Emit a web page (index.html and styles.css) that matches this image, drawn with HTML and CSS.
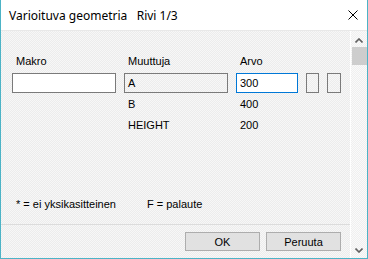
FILE: index.html
```html
<!DOCTYPE html>
<html lang="fi">
<head>
    <meta charset="UTF-8">
    <title>Varioituva geometria</title>
    <link rel="stylesheet" href="styles.css">
</head>
<body>
    <div class="window">
        <div class="titlebar">
            <span class="title">Varioituva geometria&nbsp;&nbsp;&nbsp;Rivi 1/3</span>
            <svg class="close" width="10" height="10" viewBox="0 0 10 10">
                <path d="M0.5 0.5 L9.5 9.5 M9.5 0.5 L0.5 9.5" stroke="#000" stroke-width="1" fill="none"/>
            </svg>
        </div>
        <div class="content">
            <div class="panel">
                <div class="grid">
                    <div class="label">Makro</div>
                    <div class="label">Muuttuja</div>
                    <div class="label">Arvo</div>
                    <div></div>
                    <div></div>

                    <div class="field"></div>
                    <div class="field readonly">A</div>
                    <div class="field active">300</div>
                    <div class="field small"></div>
                    <div class="field small"></div>

                    <div></div>
                    <div class="cell">B</div>
                    <div class="cell">400</div>
                    <div></div>
                    <div></div>

                    <div></div>
                    <div class="cell">HEIGHT</div>
                    <div class="cell">200</div>
                    <div></div>
                    <div></div>
                </div>
                <div class="legend">
                    <span>* = ei yksikasitteinen</span>
                    <span>F = palaute</span>
                </div>
                <div class="footer">
                    <button class="button">OK</button>
                    <button class="button">Peruuta</button>
                </div>
            </div>
            <div class="scrollbar">
                <svg class="arrow" width="8" height="5" viewBox="0 0 8 5">
                    <path d="M0.5 4.5 L4 1 L7.5 4.5" stroke="#606060" stroke-width="1.6" fill="none"/>
                </svg>
                <div class="thumb"></div>
                <div class="track"></div>
                <svg class="arrow" width="8" height="5" viewBox="0 0 8 5">
                    <path d="M0.5 0.5 L4 4 L7.5 0.5" stroke="#606060" stroke-width="1.6" fill="none"/>
                </svg>
            </div>
        </div>
    </div>
</body>
</html>
```

FILE: styles.css
```css
body {
    margin: 0;
    padding: 0;
    font-family: "Liberation Sans", Arial, sans-serif;
    font-size: 11px;
    color: #000;
    background: #fff;
}
.window {
    width: 366px;
    height: 258px;
    border: 1px solid #4cb3c6;
    border-top: none;
    display: flex;
    flex-direction: column;
    overflow: hidden;
}
.titlebar {
    height: 30px;
    background: #fff;
    display: flex;
    align-items: center;
    justify-content: space-between;
    padding: 0 9px 0 8px;
    border-bottom: 1px solid #e8e8e8;
}
.title {
    font-family: "Noto Sans", "Open Sans", sans-serif;
    font-size: 12px;
    padding-top: 1px;
}
.content {
    flex: 1;
    display: flex;
    background: repeating-conic-gradient(#ececec 0 25%, #f7f7f7 0 50%) 0 0 / 2px 2px;
}
.panel {
    width: 349px;
    display: flex;
    flex-direction: column;
}
.grid {
    display: grid;
    grid-template-columns: 104px 104px 62px 13px 14px;
    grid-template-rows: 21px 20px 21px 21px;
    column-gap: 8px;
    padding: 21px 0 0 11px;
}
.label {
    padding-left: 4px;
    line-height: 19px;
}
.field {
    border: 1px solid #7a7a7a;
    background: #fff;
    height: 18px;
    line-height: 18px;
    padding-left: 3px;
}
.readonly {
    background: transparent;
}
.active {
    border-color: #0078d7;
}
.small {
    padding: 0;
    background: transparent;
}
.cell {
    padding-left: 4px;
    line-height: 20px;
    padding-top: 1px;
}
.legend {
    margin-top: 63px;
    padding-left: 15px;
    display: flex;
    gap: 31px;
}
.footer {
    margin-top: 14px;
    border-top: 1px solid #dcdcdc;
    display: flex;
    justify-content: flex-end;
    gap: 6px;
    padding: 7px 9px 0 0;
}
.button {
    width: 75px;
    height: 19px;
    border: 1px solid #adadad;
    background: #e1e1e1;
    font-family: "Liberation Sans", Arial, sans-serif;
    font-size: 11px;
    color: #000;
    padding: 0;
}
.scrollbar {
    width: 16px;
    border-left: 1px solid #fff;
    display: flex;
    flex-direction: column;
    align-items: center;
    background: repeating-conic-gradient(#efefef 0 25%, #fafafa 0 50%) 0 0 / 2px 2px;
}
.arrow {
    margin: 7px 0 4px;
}
.scrollbar .arrow:last-child {
    margin: 4px 0 5px;
}
.thumb {
    width: 15px;
    height: 18px;
    background: #cdcdcd;
}
.track {
    flex: 1;
}
```
